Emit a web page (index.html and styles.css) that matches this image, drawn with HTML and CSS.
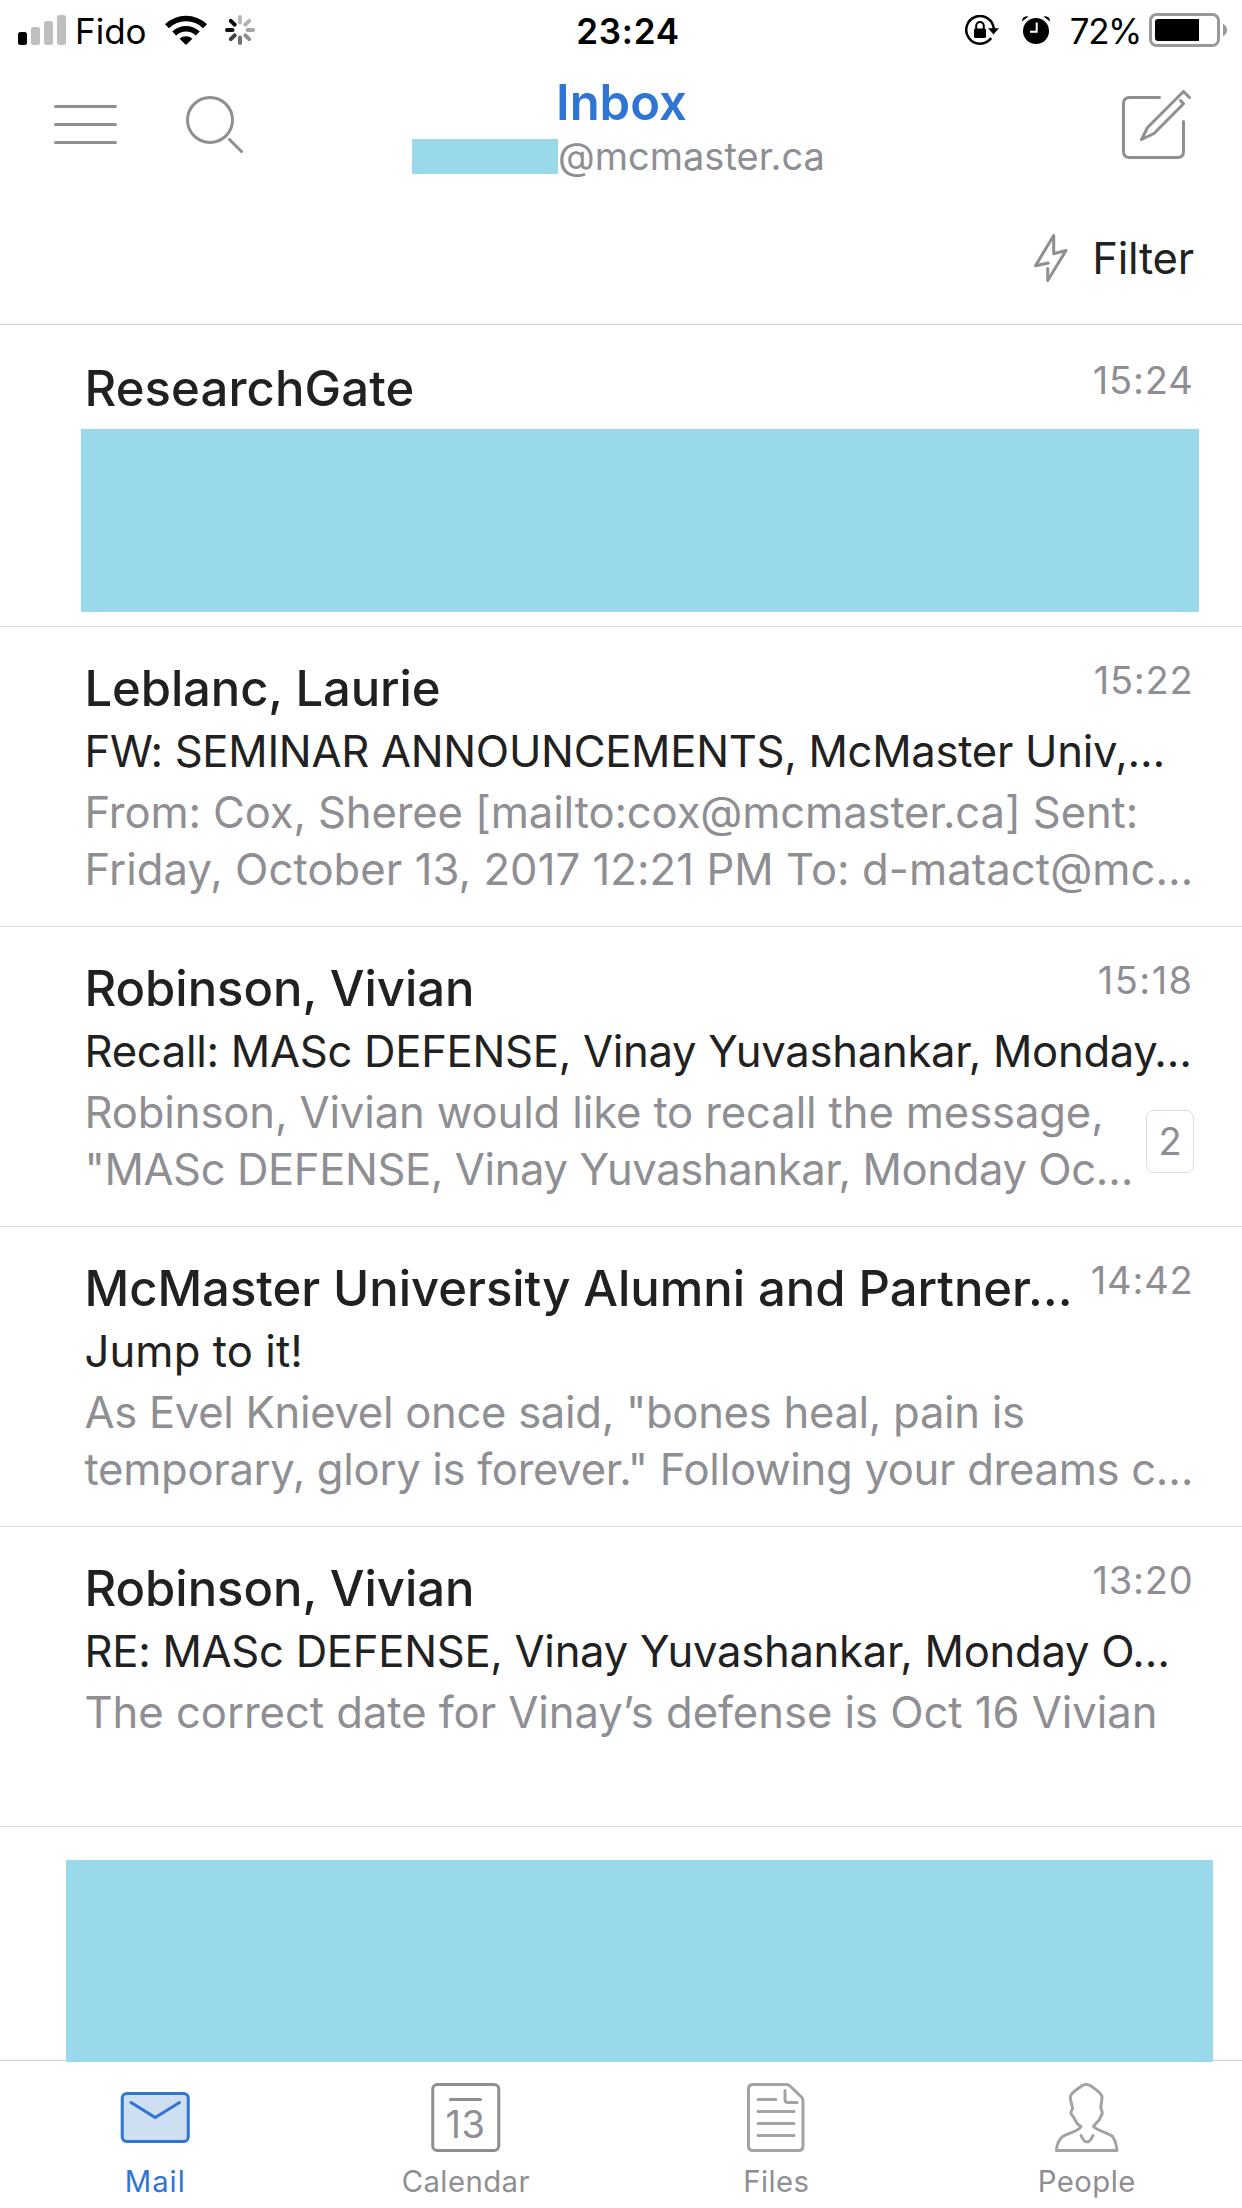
FILE: index.html
```html
<!DOCTYPE html>
<html lang="en">
<head>
<meta charset="utf-8">
<title>Inbox</title>
<link rel="stylesheet" href="styles.css">
</head>
<body>
<div class="phone">
  <header class="top">
    <div class="status">
      <div class="status-left">
        <svg class="signal" width="48" height="30" viewBox="0 0 48 30">
          <rect x="0" y="17" width="9" height="13" rx="2.5" fill="#000"/>
          <rect x="13" y="12" width="9" height="18" rx="2.5" fill="#bfbfbf"/>
          <rect x="26" y="6" width="9" height="24" rx="2.5" fill="#bfbfbf"/>
          <rect x="39" y="0" width="9" height="30" rx="2.5" fill="#bfbfbf"/>
        </svg>
        <span class="carrier">Fido</span>
        <svg class="wifi" width="42" height="30" viewBox="0 0 42 30">
          <path d="M0 9.2A30.5 30.5 0 0 1 42 9.2L38 13.2A24.5 24.5 0 0 0 4 13.2Z"/>
          <path d="M7.2 16.5A20 20 0 0 1 34.8 16.5L30.8 20.5A14.2 14.2 0 0 0 11.2 20.5Z"/>
          <path d="M14.6 23.8A9.5 9.5 0 0 1 27.4 23.8L21 30Z"/>
        </svg>
        <svg class="spinner" width="30" height="30" viewBox="-15 -15 30 30" stroke-width="4" stroke-linecap="round">
          <path d="M0-7.5V-13" stroke="#bababa"/>
          <path d="M5.3-5.3L9.2-9.2" stroke="#b3b3b3"/>
          <path d="M7.5 0H13" stroke="#a6a6a6"/>
          <path d="M5.3 5.3L9.2 9.2" stroke="#8f8f8f"/>
          <path d="M0 7.5V13" stroke="#707070"/>
          <path d="M-5.3 5.3L-9.2 9.2" stroke="#404040"/>
          <path d="M-7.5 0H-13" stroke="#101010"/>
          <path d="M-5.3-5.3L-9.2-9.2" stroke="#000"/>
        </svg>
      </div>
      <div class="clock">23:24</div>
      <div class="status-right">
        <svg class="lock" width="34" height="30" viewBox="0 0 34 30">
          <path d="M26.2 23A13.8 13.8 0 1 1 28.8 14" fill="none" stroke="#000" stroke-width="2.5"/>
          <path d="M23 13.2H34L28.5 19.5Z"/>
          <rect x="9" y="13.5" width="12" height="9.5" rx="1.5"/>
          <path d="M11.2 14V10.800A3.800 3.800 0 0 1 18.800 10.800V14" fill="none" stroke="#000" stroke-width="2"/>
        </svg>
        <svg class="alarm" width="28" height="30" viewBox="0 0 28 30">
          <circle cx="14" cy="16" r="13"/>
          <path d="M0 6.500A5 5 0 0 1 6.500 1.500Z"/>
          <path d="M28 6.500A5 5 0 0 0 21.500 1.500Z"/>
          <path d="M14.700 7.500V16.700H8" fill="none" stroke="#fff" stroke-width="2"/>
        </svg>
        <span class="percent">72%</span>
        <svg class="battery" width="78" height="34" viewBox="0 0 78 34">
          <rect x="1.500" y="1.500" width="68" height="31" rx="6" fill="none" stroke="#999" stroke-width="3"/>
          <path d="M9 6H50V28H9A3 3 0 0 1 6 25V9A3 3 0 0 1 9 6Z"/>
          <path d="M74 11A6.500 6.500 0 0 1 74 23Z" fill="#999"/>
        </svg>
      </div>
    </div>
    <div class="nav">
      <div class="nav-left">
        <svg width="63" height="39" viewBox="0 0 63 39" class="line">
          <path d="M1.500 1.500H61.500M1.500 19.500H61.500M1.500 37.500H61.500"/>
        </svg>
        <svg class="line search" width="57" height="57" viewBox="0 0 57 57">
          <circle cx="24" cy="24" r="22.500"/>
          <path d="M43.500 43.500L55.500 55.500"/>
        </svg>
      </div>
      <div class="title">
        <h1>Inbox</h1>
        <div class="account"><span class="masked"></span><span class="domain">@mcmaster.ca</span></div>
      </div>
      <svg class="line compose" width="70" height="70" viewBox="0 0 70 70">
        <path d="M37.500 7.500H7.500Q1.500 7.500 1.500 13.500V61.500Q1.500 67.500 7.500 67.500H55.500Q61.500 67.500 61.500 61.500V31.500"/>
        <path d="M67.500 7.500L61.500 1.500L25.500 37.500L19.500 49.500L32 43.500L61.500 13.800L58.500 10.500"/>
      </svg>
    </div>
    <div class="filter">
      <svg class="line" width="34" height="48" viewBox="0 0 34 48">
        <path d="M14.200 29L1.500 31.700L19.700 1.500V19.800L32 16.500L13.700 46.500V34.500"/>
      </svg>
      <span>Filter</span>
    </div>
  </header>

  <main class="list">
    <article class="mail">
      <div class="head"><h2 class="loose">ResearchGate</h2><time>15:24</time></div>
      <div class="masked"></div>
    </article>
    <article class="mail">
      <div class="head"><h2 class="snug">Leblanc, Laurie</h2><time>15:22</time></div>
      <p class="subject">FW: SEMINAR ANNOUNCEMENTS, McMaster Univ,…</p>
      <div class="preview"><p class="snug">From: Cox, Sheree [mailto:cox@mcmaster.ca] Sent:</p><p class="loose">Friday, October 13, 2017 12:21 PM To: d-matact@mc…</p></div>
    </article>
    <article class="mail">
      <div class="head"><h2>Robinson, Vivian</h2><time class="loose">15:18</time></div>
      <p class="subject">Recall: MASc DEFENSE, Vinay Yuvashankar, Monday…</p>
      <div class="preview"><p class="snug">Robinson, Vivian would like to recall the message,</p><p class="tighter">"MASc DEFENSE, Vinay Yuvashankar, Monday Oc…</p></div>
      <span class="count">2</span>
    </article>
    <article class="mail">
      <div class="head"><h2>McMaster University Alumni and Partner…</h2><time>14:42</time></div>
      <p class="subject loose">Jump to it!</p>
      <div class="preview"><p class="tight">As Evel Knievel once said, "bones heal, pain is</p><p class="tight">temporary, glory is forever." Following your dreams c…</p></div>
    </article>
    <article class="mail">
      <div class="head"><h2>Robinson, Vivian</h2><time>13:20</time></div>
      <p class="subject">RE: MASc DEFENSE, Vinay Yuvashankar, Monday O…</p>
      <div class="preview"><p class="normal">The correct date for Vinay’s defense is Oct 16 Vivian</p></div>
    </article>
    <article class="mail last"><div class="masked"></div></article>
  </main>

  <nav class="tabs">
    <div class="tab active">
      <svg width="72" height="72" viewBox="0 0 72 72" class="line">
        <rect x="3.250" y="10.500" width="66" height="48" rx="4.500" fill="#cedff1"/>
        <path d="M12 19.500L36.250 34.500L60.500 19.500"/>
      </svg>
      <span class="wide">Mail</span>
    </div>
    <div class="tab">
      <svg width="72" height="72" viewBox="0 0 72 72" class="line">
        <rect x="2.750" y="1.500" width="66" height="66" rx="4.500"/>
        <path d="M20.500 16.500H50.500"/>
        <text x="35.500" y="55" class="day">13</text>
      </svg>
      <span>Calendar</span>
    </div>
    <div class="tab">
      <svg width="72" height="72" viewBox="0 0 72 72" class="line pale">
        <path d="M13 1.500H46.500Q48.500 1.500 50 3L61.500 14Q63 15.500 63 18V63Q63 67.500 58.500 67.500H13Q8.500 67.500 8.500 63V6Q8.500 1.500 13 1.500Z"/>
        <path d="M45 7.500V16.500Q45 19.500 48 19.500H57M18 16.500H36M18 28.500H54M18 40.500H54M18 52.500H54"/>
      </svg>
      <span>Files</span>
    </div>
    <div class="tab">
      <svg width="72" height="72" viewBox="0 0 72 72" class="line pale">
        <path d="M5.500 67.500H66C65.500 62 64 57 61.500 53.500C58 50.500 46 47.500 42.500 43.500C43.500 41.500 46.500 39.500 48.500 36.500Q49.500 33 51 31.500Q51.500 27.500 50 26C49.500 22 51 18 51 13.500C50.500 10 44 6 40 3Q35 0 30.500 3C26 6.500 20 10 19.300 13.500C19 18 21.500 22 21.500 26Q19.500 28 20 31C22.500 33 24.500 38 26.500 41L30 43.500C28 48.500 15.500 50.500 11.500 53.500C8 57 5.500 61.500 5.500 67.500Z"/>
        <path d="M30 52.500C32 57 33.500 59 36 59S40 57 42 52.500"/>
      </svg>
      <span>People</span>
    </div>
  </nav>
</div>
</body>
</html>
```

FILE: styles.css
```css
* { box-sizing: border-box; }
body, h1, h2, p { margin: 0; }
body { background: #fff; font-family: Inter, "Liberation Sans", sans-serif; font-weight: 400; color: #212121; }
svg { display: block; flex: none; }
.phone { width: 1242px; height: 2208px; display: flex; flex-direction: column; overflow: hidden; }

.line { fill: none; stroke: #8e8e93; stroke-width: 3; stroke-linecap: round; stroke-linejoin: round; }
.masked { display: block; background: #9ad9ea; }

/* status bar */
.top { height: 325px; border-bottom: 1px solid #cfcfcf; }
.status { height: 60px; display: grid; grid-template-columns: 1fr auto 1fr; align-items: center; color: #000; font-size: 35px; line-height: 42px; }
.status-left, .status-right { display: flex; align-items: center; }
.status-left { padding-left: 18px; }
.status-right { justify-content: flex-end; padding-right: 15px; }
.carrier { margin-left: 9px; padding-top: 2px; }
.wifi { margin-left: 18px; }
.spinner { margin-left: 18px; }
.clock { font-weight: 600; letter-spacing: .78px; padding: 2px 0 0 14px; }
.alarm { margin-left: 23px; }
.percent { margin-left: 20px; letter-spacing: -1.43px; padding-top: 2px; }
.battery { margin-left: 8px; }

/* navigation */
.nav { display: grid; grid-template-columns: 1fr auto 1fr; align-items: start; height: 150px; }
.nav-left { display: flex; padding: 45px 0 0 54px; }
.search { margin: -9px 0 0 69px; }
.title { padding-top: 13px; margin-left: -5px; }
h1 { font-size: 49px; line-height: 60px; font-weight: 600; color: #2f75d5; text-align: center; padding-left: 6px; }
.account { display: flex; align-items: flex-start; }
.account .masked { width: 146px; height: 35px; margin-top: 6px; }
.domain { font-size: 38px; line-height: 46px; color: #8e8e93; }
.compose { justify-self: end; margin: 30px 50px 0 0; }
.filter { display: flex; justify-content: flex-end; align-items: flex-start; padding: 23px 48px 0 0; gap: 24px; font-size: 43.6px; line-height: 52px; letter-spacing: -.23px; }
.filter svg { margin-top: 1px; }

/* messages */
.list { flex: 1; min-height: 0; padding-top: 2px; }
.mail { position: relative; height: 300px; padding: 32px 49px 0 84.5px; border-bottom: 1px solid #dedede; }
.head { display: flex; justify-content: space-between; align-items: flex-start; height: 60px; white-space: nowrap; }
h2 { font-size: 49px; line-height: 60px; font-weight: 500; letter-spacing: -.04px; }
h2.snug { letter-spacing: -.13px; }
h2.loose { letter-spacing: .12px; }
time { font-size: 38px; line-height: 46px; letter-spacing: .8px; color: #8e8e93; margin: -2px -.5px 0 0; }
time.loose { letter-spacing: 1.44px; }
.mail .masked { height: 183px; margin: 10px -6px 0 -3.5px; }
.subject { font-size: 43.6px; line-height: 54px; letter-spacing: -.28px; margin-top: 6px; white-space: nowrap; }
.subject.loose { letter-spacing: .1px; }
.preview { margin-top: 5px; font-size: 43.6px; line-height: 57px; color: #8e8e93; white-space: nowrap; }
.preview .normal { letter-spacing: -.04px; }
.preview .snug { letter-spacing: -.13px; }
.preview .tight { letter-spacing: -.3px; }
.preview .tighter { letter-spacing: -.4px; }
.preview .loose { letter-spacing: .07px; }
.count { position: absolute; right: 48px; top: 183px; width: 48px; height: 63px; border: 1px solid #dedede; border-radius: 8px; font-size: 38px; line-height: 61px; text-align: center; color: #8e8e93; }
.mail.last { height: auto; border: 0; padding: 33px 29px 0 66px; }
.last .masked { height: 202px; margin: 0; position: relative; z-index: 1; }

/* tab bar */
.tabs { height: 148px; flex: none; display: grid; grid-template-columns: repeat(4, 1fr); border-top: 1px solid #cfcfcf; padding-top: 22px; }
.tab { display: flex; flex-direction: column; align-items: center; gap: 9px; font-size: 29.3px; line-height: 36px; letter-spacing: .43px; color: #8e8e93; }
.tab .wide { letter-spacing: 1px; }
.active { color: #2f75d5; }
.active .line { stroke: #2f75d5; }
.pale { stroke: #a3a3a3; }
.day { font-size: 38px; letter-spacing: .5px; text-anchor: middle; fill: #8e8e93; stroke: none; }
```
